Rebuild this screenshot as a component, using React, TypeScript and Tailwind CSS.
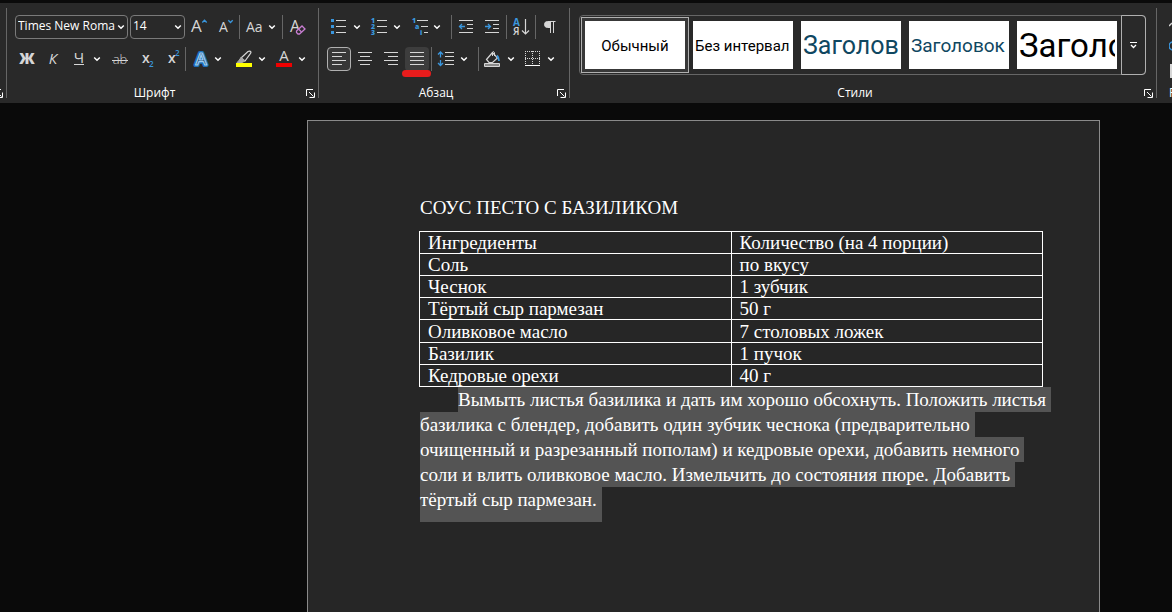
import { ReactNode } from "react";
import clsx from "clsx";

const BLUE = "#3a96dd";
const GREY = "#d6d6d6";

const ingredients = [
  ["Соль", "по вкусу"],
  ["Чеснок", "1 зубчик"],
  ["Тёртый сыр пармезан", "50 г"],
  ["Оливковое масло", "7 столовых ложек"],
  ["Базилик", "1 пучок"],
  ["Кедровые орехи", "40 г"],
];

const recipe = [
  "Вымыть листья базилика и дать им хорошо обсохнуть. Положить листья",
  "базилика с блендер, добавить один зубчик чеснока (предварительно",
  "очищенный и разрезанный пополам) и кедровые орехи, добавить немного",
  "соли и влить оливковое масло. Измельчить до состояния пюре. Добавить",
  "тёртый сыр пармезан.",
];

const styles = [
  { name: "Обычный", look: "text-[15px] text-black justify-center" },
  { name: "Без интервал", look: "text-[15px] text-black justify-start" },
  { name: "Заголовок 1", shown: "Заголово", look: "text-[25px] text-[#0f4761] justify-start" },
  { name: "Заголовок 2", shown: "Заголовок", look: "text-[19px] text-[#0f4761] justify-start" },
  { name: "Название", shown: "Заголо", look: "text-[33px] text-black justify-start" },
];

const Chevron = () => (
  <svg width="8" height="6" viewBox="0 0 8 6" fill="none" stroke="#fff" strokeWidth="1.5">
    <path d="M1.2 1.5 4 4.2 6.8 1.5" />
  </svg>
);

const Icon = ({ children }: { children: ReactNode }) => (
  <svg
    width="24"
    height="24"
    viewBox="0 0 24 24"
    fill="none"
    stroke={GREY}
    strokeWidth="1"
    className="shrink-0"
    fontFamily="'Open Sans', 'Noto Sans', sans-serif"
  >
    {children}
  </svg>
);

type ToolProps = {
  label: string;
  menu?: boolean;
  className?: string;
  children: ReactNode;
};

const Tool = ({ label, menu, className, children }: ToolProps) => (
  <div className="flex shrink-0">
    <button
      aria-label={label}
      className={clsx("relative flex h-6 w-6 items-center justify-center rounded", className)}
    >
      {children}
    </button>
    {menu && (
      <button aria-label={`${label}: меню`} className="flex h-6 w-3 items-center justify-center">
        <Chevron />
      </button>
    )}
  </div>
);

const Separator = () => <div className="h-6 w-px shrink-0 bg-[#666666]" />;
const GroupLine = () => <div className="my-[5px] w-px shrink-0 bg-[#666666]" />;

const LauncherIcon = () => (
  <svg width="9" height="9" viewBox="0 0 9 9" fill="none" stroke="#fff" className="shrink-0">
    <path d="M.5 7V.5H7M3 3l4.5 4.5M8.5 3.5v5h-5" />
  </svg>
);

const GroupLabel = ({ children }: { children: string }) => (
  <div className="relative mt-auto flex h-4 items-center justify-center pr-4 text-xs text-white">
    {children}
    <button aria-label={`${children}: параметры`} className="absolute right-[3px] top-1">
      <LauncherIcon />
    </button>
  </div>
);

const Select = ({ label, value, className }: { label: string; value: string; className: string }) => (
  <div className={clsx("relative h-6 shrink-0 rounded border border-[#7a7a7a]", className)}>
    <select
      aria-label={label}
      className="block h-5 w-full appearance-none overflow-hidden bg-transparent pl-[2px] pr-3 text-xs leading-5 text-white outline-none"
    >
      <option>{value}</option>
    </select>
    <span className="pointer-events-none absolute right-[2px] top-2">
      <Chevron />
    </span>
  </div>
);

const FontGroup = () => (
  <section className="flex w-[311px] shrink-0 flex-col pb-[2px] pt-3">
    <div className="flex items-center gap-[2px] pl-2">
      <Select label="Шрифт" value="Times New Roman" className="w-[113px]" />
      <Select label="Размер" value="14" className="w-[55px]" />
      <Tool label="Увеличить шрифт">
        <Icon>
          <text x="4" y="17" fontSize="17" fill={GREY} stroke="none">A</text>
          <path d="M15.3 7.5 17.5 5.2 19.7 7.5" stroke={BLUE} strokeWidth="1.3" />
        </Icon>
      </Tool>
      <Tool label="Уменьшить шрифт">
        <Icon>
          <text x="6" y="17" fontSize="14" fill={GREY} stroke="none">A</text>
          <path d="M15.3 5.2 17.5 7.5 19.7 5.2" stroke={BLUE} strokeWidth="1.3" />
        </Icon>
      </Tool>
      <Separator />
      <Tool label="Регистр" menu>
        <Icon>
          <text x="4" y="17" fontSize="14" fill={GREY} stroke="none">Aa</text>
        </Icon>
      </Tool>
      <div />
      <Separator />
      <Tool label="Очистить формат">
        <Icon>
          <text x="5" y="17" fontSize="16" fill={GREY} stroke="none">A</text>
          <path d="m11.5 16 5.500-5 3 3-5.500 5H13l-1.500-1.500z" fill="#292929" stroke="#c77dd1" strokeWidth="1.3" />
          <path d="m13.500 14 3 3" stroke="#c77dd1" strokeWidth="1.3" />
        </Icon>
      </Tool>
    </div>

    <div className="mt-2 flex items-center gap-[2px] pl-2">
      <Tool label="Полужирный">
        <Icon>
          <text x="12" y="17" fontSize="15" fontWeight="800" textAnchor="middle" fill={GREY} stroke="none">Ж</text>
        </Icon>
      </Tool>
      <Tool label="Курсив">
        <Icon>
          <text x="12" y="17" fontSize="15" fontStyle="italic" textAnchor="middle" fill={GREY} stroke="none">К</text>
        </Icon>
      </Tool>
      <Tool label="Подчеркнутый" menu>
        <Icon>
          <text x="12" y="16" fontSize="15" textAnchor="middle" fill={GREY} stroke="none">Ч</text>
          <path d="M7 17.5h10" />
        </Icon>
      </Tool>
      <div />
      <Tool label="Зачеркнутый">
        <Icon>
          <text x="13" y="17" fontSize="13" fontWeight="300" textAnchor="middle" fill={GREY} stroke="none">ab</text>
          <path d="M5 13.5h16" />
        </Icon>
      </Tool>
      <Tool label="Подстрочный знак">
        <Icon>
          <text x="9" y="16" fontSize="14" fontWeight="600" fill={GREY} stroke="none">x</text>
          <text x="16" y="20" fontSize="8" fontWeight="600" fill={BLUE} stroke="none">2</text>
        </Icon>
      </Tool>
      <Tool label="Надстрочный знак">
        <Icon>
          <text x="9" y="16" fontSize="14" fontWeight="600" fill={GREY} stroke="none">x</text>
          <text x="16" y="9" fontSize="8" fontWeight="600" fill={BLUE} stroke="none">2</text>
        </Icon>
      </Tool>
      <Separator />
      <Tool label="Текстовые эффекты" menu>
        <Icon>
          <g fontSize="17" fontWeight="600" textAnchor="middle" strokeLinejoin="round">
            <text x="13" y="18" fill="none" stroke="#1c6fb8" strokeWidth="4">A</text>
            <text x="13" y="18" fill="#1e3d5c" stroke="#9ccdf2" strokeWidth="1.2">A</text>
          </g>
        </Icon>
      </Tool>
      <div className="w-1" />
      <Tool label="Цвет выделения" menu>
        <Icon>
          <path d="m9 11 7-6.5q2-1 3 .6 0 1-1 2L13 14z" strokeWidth="1.2" />
          <path d="M9 10.5 6.5 14 5 15.5h5l3-1.5z" fill="#a8a8a8" stroke="#a8a8a8" />
          <path d="M4 16h16v4H4z" fill="#ffff00" stroke="none" />
        </Icon>
      </Tool>
      <div />
      <Tool label="Цвет текста" menu>
        <Icon>
          <text x="12" y="14" fontSize="15" textAnchor="middle" fill={GREY} stroke="none">A</text>
          <path d="M4 16h16v4H4z" fill="#f00000" stroke="none" />
        </Icon>
      </Tool>
    </div>
    <GroupLabel>Шрифт</GroupLabel>
  </section>
);

const ParagraphGroup = () => (
  <section className="flex w-[250px] shrink-0 flex-col pb-[2px] pt-3">
    <div className="flex items-center gap-[2px] pl-2">
      <Tool label="Маркеры" menu>
        <Icon>
          <path d="M4 4h3v3H4zM4 10h3v3H4zM4 16h3v3H4z" fill={BLUE} stroke="none" />
          <path d="M9 5.5h10M9 11.5h10M9 17.5h10" />
        </Icon>
      </Tool>
      <div />
      <Tool label="Нумерация" menu>
        <Icon>
          <g fontSize="7" fontWeight="800" fill={BLUE} stroke="none">
            <text x="4" y="8">1</text>
            <text x="4" y="14">2</text>
            <text x="4" y="20">3</text>
          </g>
          <path d="M10 5.5h10M10 11.5h10M10 17.5h10" />
        </Icon>
      </Tool>
      <div />
      <Tool label="Многоуровневый список" menu>
        <Icon>
          <g fontSize="7" fontWeight="800" fill={BLUE} stroke="none">
            <text x="5" y="8">1</text>
            <text x="8" y="14">a</text>
            <text x="13" y="20">i</text>
          </g>
          <path d="M10 5.5h11M14 11.5h7M17 17.5h4" />
        </Icon>
      </Tool>
      <div className="w-1" />
      <Separator />
      <Tool label="Уменьшить отступ">
        <Icon>
          <path d="M5 5.5h14M13 9.5h6M13 13.5h6M5 17.5h14" />
          <path d="M11 11.5H5.5M8 9l-2.5 2.5L8 14" stroke={BLUE} strokeWidth="1.3" />
        </Icon>
      </Tool>
      <Tool label="Увеличить отступ">
        <Icon>
          <path d="M5 5.5h14M13 9.5h6M13 13.5h6M5 17.5h14" />
          <path d="M5 11.5h5.5M8 9l2.5 2.5L8 14" stroke={BLUE} strokeWidth="1.3" />
        </Icon>
      </Tool>
      <Separator />
      <Tool label="Сортировка">
        <Icon>
          <text x="4" y="11" fontSize="10" fontWeight="700" fill={BLUE} stroke="none">А</text>
          <text x="4" y="20" fontSize="10" fontWeight="600" fill={GREY} stroke="none">Я</text>
          <path d="M16.5 4v15M13 15.5l3.5 3.5 3.5-3.5" strokeWidth="1.2" />
        </Icon>
      </Tool>
      <Separator />
      <Tool label="Отобразить все знаки">
        <Icon>
          <path d="M12.5 6v12M15.5 6v12M10 6.5h7.5" />
          <path d="M12 6.5H9.500a3 3 0 0 0 0 6H12z" fill={GREY} />
        </Icon>
      </Tool>
    </div>

    <div className="mt-2 flex items-center gap-[2px] pl-2">
      <Tool label="По левому краю" className="border border-[#b0b0b0] bg-[#383838]">
        <Icon>
          <path d="M5 5.5h14M5 9.5h10M5 13.5h14M5 17.5h10" />
        </Icon>
      </Tool>
      <Tool label="По центру">
        <Icon>
          <path d="M5 5.5h14M7 9.5h10M5 13.5h14M7 17.5h10" />
        </Icon>
      </Tool>
      <Tool label="По правому краю">
        <Icon>
          <path d="M5 5.5h14M9 9.5h10M5 13.5h14M9 17.5h10" />
        </Icon>
      </Tool>
      <Tool label="По ширине" className="bg-[#3d3d3d]">
        <Icon>
          <path d="M5 5.5h14M5 9.5h14M5 13.5h14M5 17.5h14" />
        </Icon>
        <span className="absolute -bottom-[6px] -left-[3px] h-[7px] w-[29px] rounded-full bg-[#e81c1c]" />
      </Tool>
      <Separator />
      <Tool label="Интервал" menu>
        <Icon>
          <path d="M11 5.5h9M11 9.5h9M11 13.5h9M11 17.5h9" />
          <path d="M6.5 5v5.5M6.5 13v5.5M4 7.5 6.5 5 9 7.5M4 16l2.5 2.5L9 16" stroke={BLUE} strokeWidth="1.3" />
        </Icon>
      </Tool>
      <div className="w-1" />
      <Separator />
      <Tool label="Заливка" menu>
        <Icon>
          <path d="m5.5 12.5 6-7 5 5.5-5 4.5H8z" strokeWidth="1.2" />
          <path d="M11.5 9V5.5q1-2 2 0V9" />
          <path d="M16 8.5q2 2 2 5.5" stroke={BLUE} strokeWidth="1.8" />
          <path d="M3.5 16.5h15v3h-15z" fill="#8a8a8a" />
        </Icon>
      </Tool>
      <div />
      <Tool label="Границы" menu>
        <Icon>
          <path d="M4 4.5h15M4 11.5h15M4.5 4v14M11.5 4v14M18.5 4v14" strokeDasharray="1 1" />
          <path d="M4 18.5h15" stroke="#fff" />
        </Icon>
      </Tool>
    </div>
    <GroupLabel>Абзац</GroupLabel>
  </section>
);

const StylesGroup = () => (
  <section className="flex min-w-0 flex-1 flex-col pb-[2px] pt-3">
    <div className="ml-[9px] mr-[10px] flex h-[60px] rounded border border-[#666666]">
      <div className="flex min-w-0 flex-1 overflow-hidden p-px">
        {styles.map((style, i) => (
          <button
            key={style.name}
            aria-label={style.name}
            className={clsx(
              "flex h-14 w-[108px] shrink-0 border p-[3px]",
              i === 0 ? "border-[#b0b0b0] bg-[#383838]" : "border-transparent"
            )}
          >
            <span className="flex h-12 w-full bg-white px-[2px]">
              <span
                className={clsx(
                  "flex w-full items-center overflow-hidden whitespace-nowrap pt-[2px] font-['Roboto','Noto_Sans',sans-serif]",
                  style.look
                )}
              >
                {style.shown ?? style.name}
              </span>
            </span>
          </button>
        ))}
      </div>
      <button
        aria-label="Все стили"
        className="-m-px flex w-[25px] shrink-0 items-center justify-center rounded-r border border-[#b0b0b0]"
      >
        <svg width="8" height="8" viewBox="0 0 8 8" fill="none" stroke="#fff">
          <path d="M0 1.5h7" />
          <path d="M1 4 3.5 6.5 6 4" strokeWidth="1.3" />
        </svg>
      </button>
    </div>
    <GroupLabel>Стили</GroupLabel>
  </section>
);

const Ribbon = () => (
  <header className="mt-[3px] flex h-[100px] overflow-hidden bg-[#292929] font-['Open_Sans','Noto_Sans',sans-serif]">
    <div className="flex w-[6px] shrink-0 items-end justify-end pb-[5px] pr-[3px]">
      <LauncherIcon />
    </div>
    <GroupLine />
    <FontGroup />
    <GroupLine />
    <ParagraphGroup />
    <GroupLine />
    <StylesGroup />
    <GroupLine />
    <div className="flex w-[15px] shrink-0 flex-col overflow-hidden pb-[2px] pl-3 pt-4 text-xs text-white">
      <svg width="16" height="60" viewBox="0 0 16 60" fill="none" className="shrink-0">
        <path d="M0 7 3 4" stroke={GREY} strokeWidth="1.5" />
        <circle cx="4" cy="27" r="4" stroke={BLUE} strokeWidth="1.5" />
        <path d="M1 45h6v14H1z" fill={GREY} />
      </svg>
      <span className="mt-auto">Редактирование</span>
    </div>
  </header>
);

const App = () => {
  return (
    <div className="flex min-h-screen flex-col bg-[#0a0a0a]">
      <Ribbon />
      <main className="flex flex-1 justify-center pl-[235px] pt-[17px]">
        <article className="w-[793px] shrink-0 border border-b-0 border-[#8a8a8a] bg-[#262626] pl-28 pr-14 pt-[74px] font-['Liberation_Serif',serif] text-[19px] text-white">
          <h1 className="leading-[25px]">СОУС ПЕСТО С БАЗИЛИКОМ</h1>
          <table className="-ml-px mt-[11px] h-[156px] w-[624px] table-fixed border-collapse text-left leading-[21px]">
            <thead>
              <tr>
                <th className="border border-white px-2 py-0 font-normal">Ингредиенты</th>
                <th className="border border-white px-2 py-0 font-normal">Количество (на 4 порции)</th>
              </tr>
            </thead>
            <tbody>
              {ingredients.map(([name, amount]) => (
                <tr key={name}>
                  <td className="border border-white px-2 py-0">{name}</td>
                  <td className="border border-white px-2 py-0">{amount}</td>
                </tr>
              ))}
            </tbody>
          </table>
          <div className="whitespace-nowrap leading-[25px]">
            {recipe.map((line, i) => (
              <p
                key={line}
                className={clsx(
                  "w-fit bg-[#545454] pr-[5px]",
                  i === 0 && "ml-[38px]",
                  i === recipe.length - 1 && "pb-[10px]"
                )}
              >
                {line}
              </p>
            ))}
          </div>
        </article>
      </main>
    </div>
  );
};

export default App;
